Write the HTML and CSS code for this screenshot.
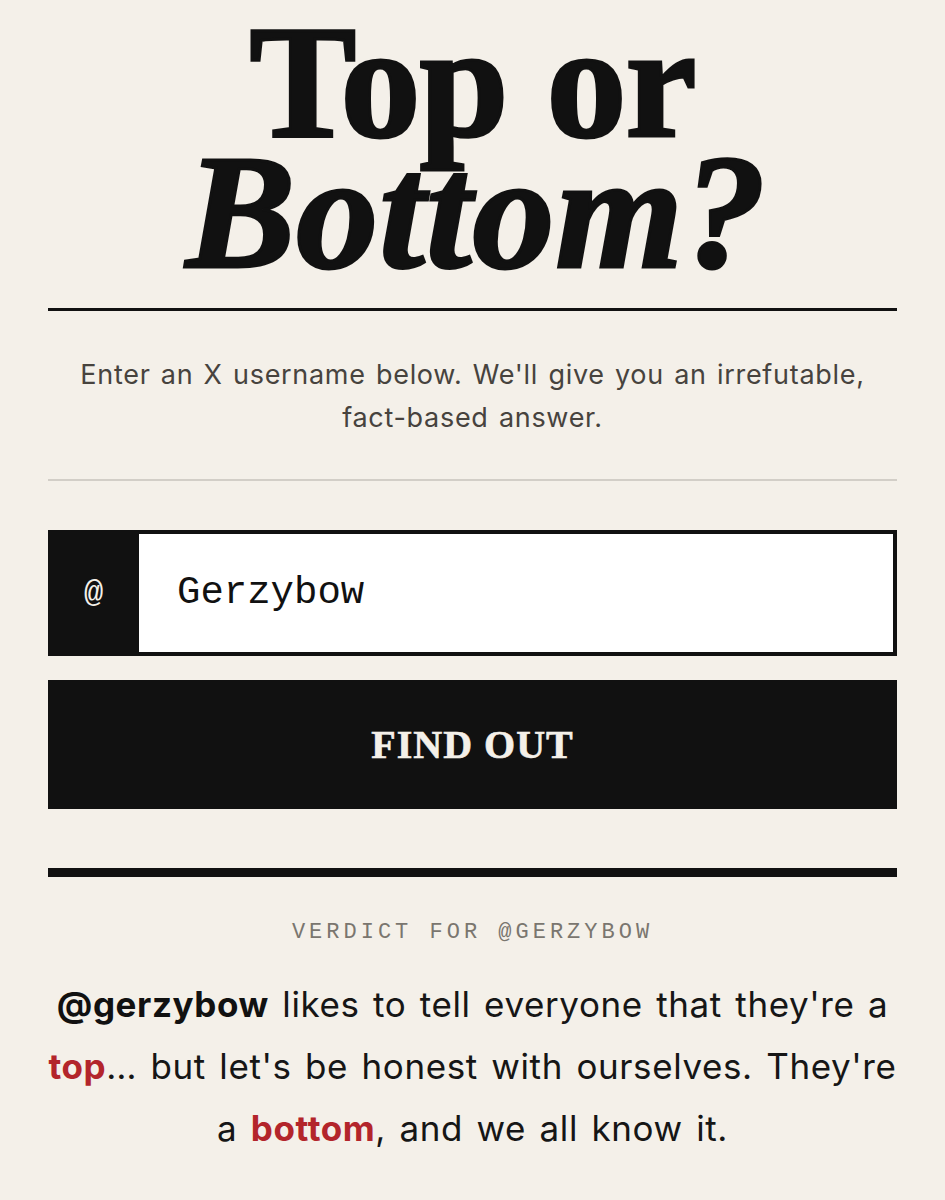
FILE: index.html
```html
<!DOCTYPE html>
<html lang="en">
<head>
<meta charset="utf-8">
<title>Top or Bottom?</title>
<link rel="stylesheet" href="styles.css">
</head>
<body>
<main class="page">
  <h1 class="title">
    <span class="title-top">Top or</span>
    <span class="title-bottom">Bottom?</span>
  </h1>
  <hr class="rule-strong">
  <p class="intro">Enter an X username below. We'll give you an irrefutable,<br>fact-based answer.</p>
  <hr class="rule-light">
  <form class="lookup">
    <div class="field">
      <span class="field-prefix">@</span>
      <span class="field-input">Gerzybow</span>
    </div>
    <button type="button" class="submit">FIND OUT</button>
  </form>
  <hr class="rule-heavy">
  <section class="verdict">
    <div class="verdict-label">VERDICT FOR @GERZYBOW</div>
    <p class="verdict-text"><strong class="handle">@gerzybow</strong> likes to tell everyone that they're a<br><strong class="red">top</strong>… but let's be honest with ourselves. They're<br>a <strong class="red">bottom</strong>, and we all know it.</p>
  </section>
</main>
</body>
</html>
```
FILE: styles.css
```css
html, body {
  margin: 0;
  padding: 0;
  background: #f4f0e9;
}
body {
  color: #111;
  font-family: Inter, "Noto Sans", sans-serif;
}
.page {
  padding: 17px 48px 0;
}
.title {
  margin: 0;
  text-align: center;
  font-family: "Liberation Serif", "Times New Roman", serif;
  font-weight: 700;
  color: #111;
  -webkit-text-stroke: 3px #111;
}
.title-top {
  display: block;
  font-size: 160px;
  line-height: 130px;
  letter-spacing: -1px;
}
.title-bottom {
  display: block;
  font-size: 164px;
  line-height: 130px;
  font-style: italic;
  letter-spacing: 1px;
  padding-left: 8px;
}
.rule-strong {
  margin: 31px 0 0;
  border: 0;
  height: 3px;
  background: #111;
}
.intro {
  margin: 42px 0 0;
  text-align: center;
  font-size: 27px;
  line-height: 43px;
  color: #47433e;
  letter-spacing: 0.7px;
  word-spacing: 2px;
  white-space: nowrap;
}
.rule-light {
  margin: 40px 0 0;
  border: 0;
  height: 2px;
  background: #d2cec7;
}
.lookup {
  margin: 49px 0 0;
  display: flex;
  flex-direction: column;
  gap: 24px;
}
.field {
  display: flex;
  height: 126px;
  box-sizing: border-box;
  border: 4px solid #111;
  border-left: 0;
  background: #111;
}
.field-prefix {
  width: 91px;
  display: flex;
  align-items: center;
  justify-content: center;
  color: #f4f0e9;
  font-family: "Liberation Mono", "DejaVu Sans Mono", monospace;
  font-size: 32px;
}
.field-input {
  flex: 1;
  background: #fff;
  display: flex;
  align-items: center;
  padding-left: 38px;
  font-family: "Liberation Mono", "DejaVu Sans Mono", monospace;
  font-size: 39px;
  color: #111;
}
.submit {
  height: 129px;
  border: 0;
  background: #111;
  color: #f4f0e9;
  font-family: "Liberation Serif", "Times New Roman", serif;
  font-weight: 700;
  font-size: 40px;
  letter-spacing: 1px;
  -webkit-text-stroke: 0.6px #f4f0e9;
  cursor: pointer;
}
.rule-heavy {
  margin: 59px 0 0;
  border: 0;
  height: 9px;
  background: #111;
}
.verdict {
  text-align: center;
}
.verdict-label {
  margin-top: 44px;
  font-family: "Liberation Mono", "DejaVu Sans Mono", monospace;
  font-size: 22px;
  line-height: 24px;
  letter-spacing: 4px;
  color: #7a766f;
}
.verdict-text {
  margin: 28px 0 0;
  font-size: 35px;
  line-height: 62px;
  letter-spacing: 0.6px;
  word-spacing: 3px;
  white-space: nowrap;
  color: #161616;
}
.handle {
  font-weight: 700;
  color: #111;
}
.red {
  font-weight: 700;
  color: #b3252b;
}
```
